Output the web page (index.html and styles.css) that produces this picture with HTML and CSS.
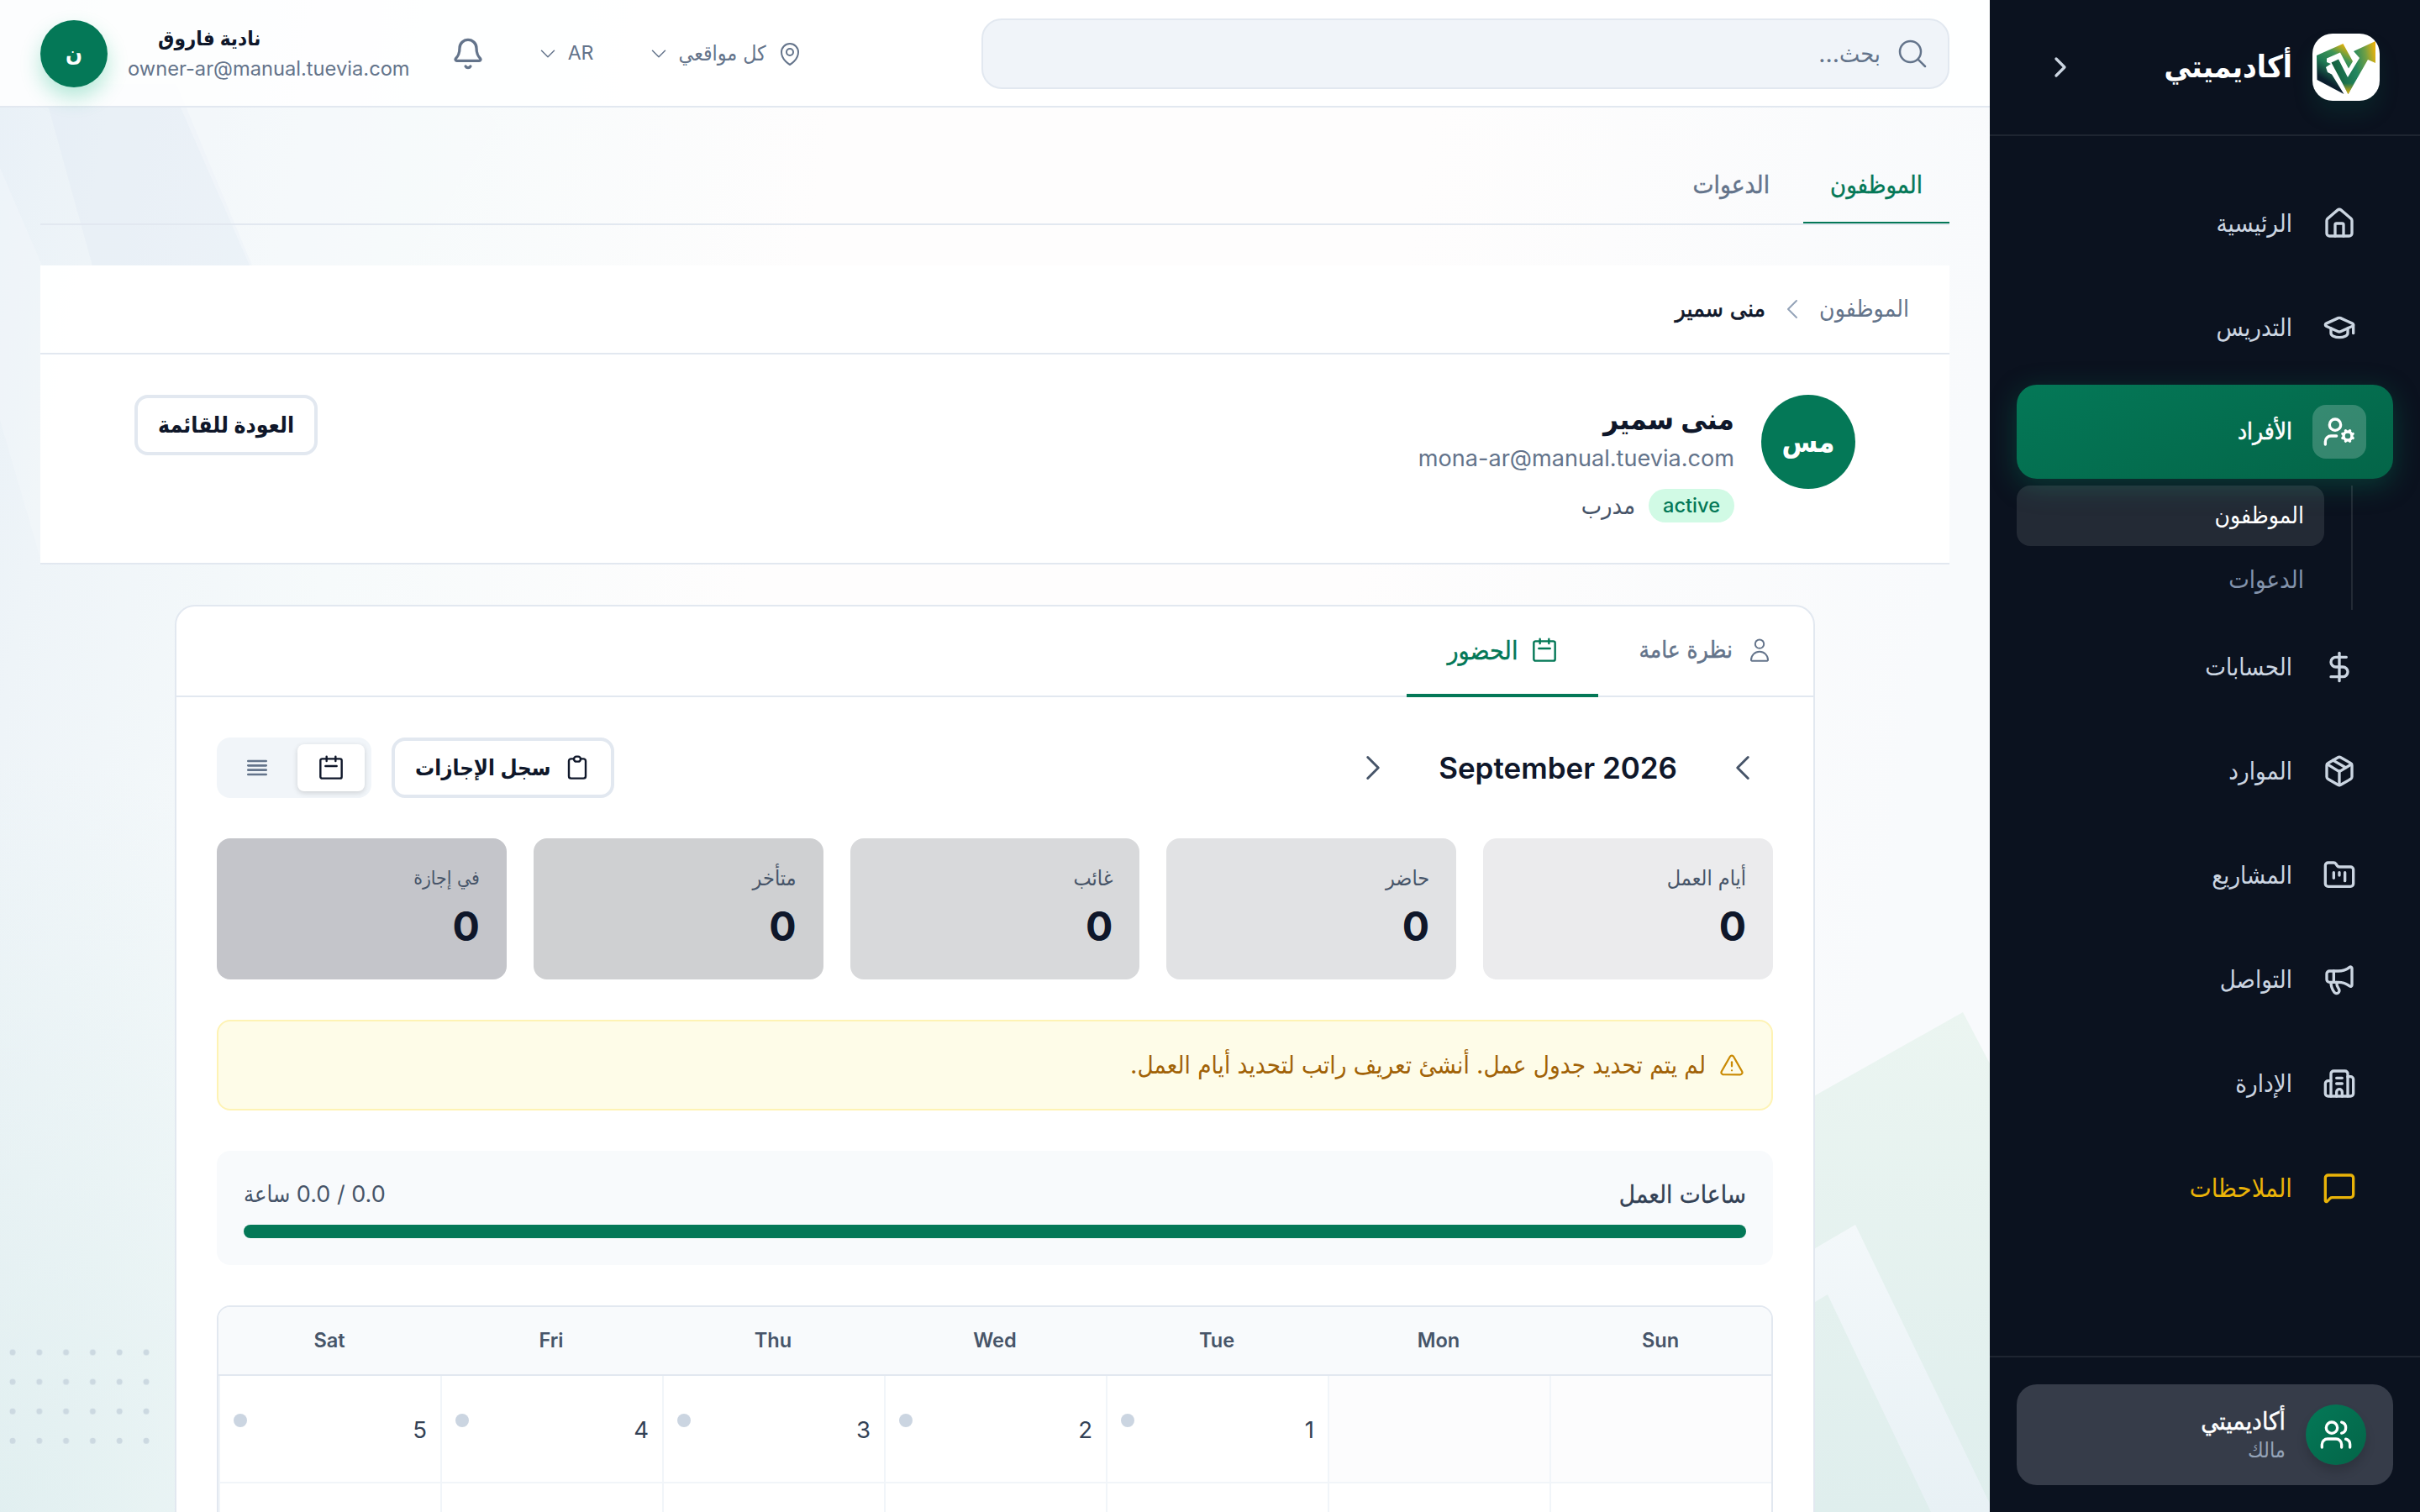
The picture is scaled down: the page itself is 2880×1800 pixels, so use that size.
FILE: index.html
```html
<!DOCTYPE html>
<html lang="ar" dir="rtl">
<head>
    <meta charset="UTF-8">
    <meta name="viewport" content="width=device-width, initial-scale=1.0">
    <title>أكاديميتي</title>
    <link rel="stylesheet" href="styles.css">
</head>
<body>
    <aside class="sidebar">
        <div class="brand">
            <svg class="brand-logo" viewBox="0 0 80 80">
                <defs>
                    <linearGradient id="ribbon" x1="0.3" y1="1" x2="0.75" y2="0">
                        <stop offset="0.2" stop-color="#0b1f2e"></stop>
                        <stop offset="0.5" stop-color="#1f7a54"></stop>
                        <stop offset="0.75" stop-color="#3f9556"></stop>
                        <stop offset="1" stop-color="#eab308"></stop>
                    </linearGradient>
                    <linearGradient id="arrow" x1="0" y1="0.3" x2="1" y2="0.1">
                        <stop offset="0" stop-color="#14603f"></stop>
                        <stop offset="0.5" stop-color="#23875f"></stop>
                        <stop offset="0.75" stop-color="#6f9f45"></stop>
                        <stop offset="1" stop-color="#f0b40a"></stop>
                    </linearGradient>
                    <linearGradient id="tip" x1="0" y1="0" x2="0" y2="1">
                        <stop offset="0.7" stop-color="#eab308" stop-opacity="0"></stop>
                        <stop offset="1" stop-color="#eab308"></stop>
                    </linearGradient>
                </defs>
                <path fill="url(#ribbon)" d="M5 26 36.500 12 48 33 43 41.500 33 22.500 17 29.500 17 34 22 36 16 40 18 46 23 48.500 37.500 72 5.500 55z"></path>
                <path fill="url(#arrow)" d="M22.500 34.500 31 30.500 42 52 56 29 49 21 75 9 75 35 66 31 42.500 72z"></path>
                <path fill="url(#tip)" d="M22.500 34.500 31 30.500 42 52 56 29 66 31 42.500 72z"></path>
            </svg>
            <span class="brand-name">أكاديميتي</span>
            <button class="collapse">
                <svg class="icon" viewBox="0 0 24 24"><path d="m9 18 6-6-6-6"></path></svg>
            </button>
        </div>

        <nav class="nav">
            <a class="nav-item">
                <span class="nav-icon"><svg class="icon" viewBox="0 0 24 24"><path d="M15 21v-8a1 1 0 0 0-1-1h-4a1 1 0 0 0-1 1v8"></path><path d="M3 10a2 2 0 0 1 .709-1.528l7-5.999a2 2 0 0 1 2.582 0l7 5.999A2 2 0 0 1 21 10v9a2 2 0 0 1-2 2H5a2 2 0 0 1-2-2z"></path></svg></span>
                <span>الرئيسية</span>
            </a>
            <a class="nav-item">
                <span class="nav-icon"><svg class="icon" viewBox="0 0 24 24"><path d="M21.420 10.922a1 1 0 0 0-.019-1.838L12.830 5.180a2 2 0 0 0-1.660 0L2.600 9.080a1 1 0 0 0 0 1.832l8.570 3.908a2 2 0 0 0 1.660 0z"></path><path d="M22 10v6"></path><path d="M6 12.500V16a6 3 0 0 0 12 0v-3.500"></path></svg></span>
                <span>التدريس</span>
            </a>
            <div class="nav-group">
                <a class="nav-item active">
                    <span class="nav-icon"><svg class="icon" viewBox="0 0 24 24"><path d="M10 15H6a4 4 0 0 0-4 4v2"></path><circle cx="9" cy="7" r="4"></circle><circle cx="18" cy="15" r="3"></circle><path d="m14.305 16.530.923-.382"></path><path d="m15.228 13.852-.923-.383"></path><path d="m16.852 12.228-.383-.923"></path><path d="m16.852 17.772-.383.924"></path><path d="m19.148 12.228.383-.923"></path><path d="m19.530 18.696-.382-.924"></path><path d="m20.772 13.852.924-.383"></path><path d="m20.772 16.148.924.383"></path></svg></span>
                    <span>الأفراد</span>
                </a>
                <div class="subnav">
                    <a class="subnav-item current">الموظفون</a>
                    <a class="subnav-item">الدعوات</a>
                </div>
            </div>
            <a class="nav-item">
                <span class="nav-icon"><svg class="icon" viewBox="0 0 24 24"><path d="M12 2v20"></path><path d="M17 5H9.500a3.500 3.500 0 0 0 0 7h5a3.500 3.500 0 0 1 0 7H6"></path></svg></span>
                <span>الحسابات</span>
            </a>
            <a class="nav-item">
                <span class="nav-icon"><svg class="icon" viewBox="0 0 24 24"><path d="M11 21.730a2 2 0 0 0 2 0l7-4A2 2 0 0 0 21 16V8a2 2 0 0 0-1-1.730l-7-4a2 2 0 0 0-2 0l-7 4A2 2 0 0 0 3 8v8a2 2 0 0 0 1 1.730z"></path><path d="M12 22V12"></path><path d="m3.300 7 7.703 4.734a2 2 0 0 0 1.994 0L20.700 7"></path><path d="m7.500 4.270 9 5.150"></path></svg></span>
                <span>الموارد</span>
            </a>
            <a class="nav-item">
                <span class="nav-icon"><svg class="icon" viewBox="0 0 24 24"><path d="M4 20h16a2 2 0 0 0 2-2V8a2 2 0 0 0-2-2h-7.930a2 2 0 0 1-1.660-.9l-.82-1.200A2 2 0 0 0 7.930 3H4a2 2 0 0 0-2 2v13c0 1.100.9 2 2 2Z"></path><path d="M8 10v4"></path><path d="M12 10v2"></path><path d="M16 10v6"></path></svg></span>
                <span>المشاريع</span>
            </a>
            <a class="nav-item">
                <span class="nav-icon"><svg class="icon" viewBox="0 0 24 24"><path d="M11 6a13 13 0 0 0 8.400-2.800A1 1 0 0 1 21 4v12a1 1 0 0 1-1.600.8A13 13 0 0 0 11 14H5a2 2 0 0 1-2-2V8a2 2 0 0 1 2-2z"></path><path d="M6 14a12 12 0 0 0 2.400 7.200 2 2 0 0 0 3.200-2.400A8 8 0 0 1 10 14"></path><path d="M8 6v8"></path></svg></span>
                <span>التواصل</span>
            </a>
            <a class="nav-item">
                <span class="nav-icon"><svg class="icon" viewBox="0 0 24 24"><path d="M10 12h4"></path><path d="M10 8h4"></path><path d="M14 21v-3a2 2 0 0 0-4 0v3"></path><path d="M6 10H4a2 2 0 0 0-2 2v7a2 2 0 0 0 2 2h16a2 2 0 0 0 2-2V9a2 2 0 0 0-2-2h-2"></path><path d="M6 21V5a2 2 0 0 1 2-2h8a2 2 0 0 1 2 2v16"></path></svg></span>
                <span>الإدارة</span>
            </a>
            <a class="nav-item feedback">
                <span class="nav-icon"><svg class="icon" viewBox="0 0 24 24"><path d="M22 17a2 2 0 0 1-2 2H6.828a2 2 0 0 0-1.414.586l-2.202 2.202A.71.71 0 0 1 2 21.286V5a2 2 0 0 1 2-2h16a2 2 0 0 1 2 2z"></path></svg></span>
                <span>الملاحظات</span>
            </a>
        </nav>

        <div class="sidebar-footer">
            <div class="account">
                <span class="account-avatar"><svg class="icon" viewBox="0 0 24 24"><path d="M16 21v-2a4 4 0 0 0-4-4H6a4 4 0 0 0-4 4v2"></path><path d="M16 3.128a4 4 0 0 1 0 7.744"></path><path d="M22 21v-2a4 4 0 0 0-3-3.870"></path><circle cx="9" cy="7" r="4"></circle></svg></span>
                <div>
                    <div class="account-name">أكاديميتي</div>
                    <div class="account-role">مالك</div>
                </div>
            </div>
        </div>
    </aside>

    <div class="main">
        <svg class="backdrop" viewBox="0 0 2368 1800" preserveAspectRatio="none">
            <defs>
                <linearGradient id="leaf" x1="0" y1="0" x2="0" y2="1">
                    <stop offset="0" stop-color="#ebf5f1"></stop>
                    <stop offset="1" stop-color="#dfeeed"></stop>
                </linearGradient>
                <linearGradient id="beam" x1="0" y1="0" x2="0" y2="1">
                    <stop offset="0" stop-color="#f3f8fa"></stop>
                    <stop offset="1" stop-color="#e8f1f5"></stop>
                </linearGradient>
                <pattern id="dots" x="0" y="1592" width="31.800" height="35.100" patternUnits="userSpaceOnUse">
                    <circle cx="15" cy="18" r="3.500" fill="#ccd9e1"></circle>
                </pattern>
            </defs>
            <path fill="#dfe9f4" fill-opacity="0.350" d="M50 100H210L300 316H110z"></path>
            <path fill="#f6fafc" fill-opacity="0.350" d="M0 200 50 316V672L0 500z"></path>
            <path fill="#f8fbfc" fill-opacity="0.400" d="M215 128H575L592 148 485 316H297z"></path>
            <path fill="url(#leaf)" d="M2336 1205 2368 1266V1800H2100V1338z"></path>
            <path fill="url(#beam)" d="M2208 1458 2368 1790V1800H2298L2175 1541 2150 1556V1492z"></path>
            <rect x="0" y="1592" width="190" height="140" fill="url(#dots)"></rect>
        </svg>

        <header class="topbar">
            <div class="search">
                <svg class="icon thin" viewBox="0 0 24 24"><path d="m21 21-5.197-5.197m0 0A7.500 7.500 0 1 0 5.196 5.196a7.500 7.500 0 0 0 10.607 10.607Z"></path></svg>
                <span>بحث...</span>
            </div>
            <div class="topbar-actions">
                <div class="picker sites">
                    <svg class="icon thin small" viewBox="0 0 24 24"><path d="M15 10.500a3 3 0 1 1-6 0 3 3 0 0 1 6 0Z"></path><path d="M19.500 10.500c0 7.142-7.500 11.250-7.500 11.250S4.500 17.642 4.500 10.500a7.500 7.500 0 1 1 15 0Z"></path></svg>
                    <span>كل مواقعي</span>
                    <svg class="icon thin tiny" viewBox="0 0 24 24"><path d="m19.500 8.250-7.500 7.500-7.500-7.500"></path></svg>
                </div>
                <div class="picker lang">
                    <span>AR</span>
                    <svg class="icon thin tiny" viewBox="0 0 24 24"><path d="m19.500 8.250-7.500 7.500-7.500-7.500"></path></svg>
                </div>
                <button class="bell">
                    <svg class="icon" viewBox="0 0 24 24"><path d="M10.268 21a2 2 0 0 0 3.464 0"></path><path d="M3.262 15.326A1 1 0 0 0 4 17h16a1 1 0 0 0 .74-1.673C19.410 13.956 18 12.499 18 8A6 6 0 0 0 6 8c0 4.499-1.411 5.956-2.738 7.326"></path></svg>
                </button>
                <div class="user">
                    <div class="user-text">
                        <div class="user-name">نادية فاروق</div>
                        <div class="user-email">owner-ar@manual.tuevia.com</div>
                    </div>
                    <span class="user-avatar">ن</span>
                </div>
            </div>
        </header>

        <div class="content">
            <div class="page-tabs">
                <a class="page-tab active">الموظفون</a>
                <a class="page-tab">الدعوات</a>
            </div>

            <section class="profile">
                <div class="breadcrumb">
                    <span>الموظفون</span>
                    <svg class="icon thin small" viewBox="0 0 24 24"><path d="M15.750 19.500 8.250 12l7.500-7.500"></path></svg>
                    <span class="breadcrumb-current">منى سمير</span>
                </div>
                <div class="profile-body">
                    <span class="profile-avatar">مس</span>
                    <div class="profile-info">
                        <h1>منى سمير</h1>
                        <div class="profile-email">mona-ar@manual.tuevia.com</div>
                        <div class="profile-meta">
                            <span class="badge">active</span>
                            <span>مدرب</span>
                        </div>
                    </div>
                    <button class="btn">العودة للقائمة</button>
                </div>
            </section>

            <section class="card">
                <div class="card-tabs">
                    <a class="card-tab">
                        <svg class="icon thin small" viewBox="0 0 24 24"><circle cx="12" cy="6.500" r="3.900"></circle><path d="M4.500 20.800a7.500 7.500 0 0 1 15 0 .7.7 0 0 1-.7.7H5.200a.7.7 0 0 1-.7-.7z"></path></svg>
                        <span>نظرة عامة</span>
                    </a>
                    <a class="card-tab active">
                        <svg class="icon medium small" viewBox="0 0 24 24"><rect x="2.500" y="4" width="19" height="17.500" rx="1.500"></rect><path d="M8 2v4"></path><path d="M16 2v4"></path><path d="M7 10.500h10"></path></svg>
                        <span>الحضور</span>
                    </a>
                </div>

                <div class="card-body">
                    <div class="toolbar">
                        <div class="month">
                            <button class="month-btn"><svg class="icon medium" viewBox="0 0 24 24"><path d="M15.750 19.500 8.250 12l7.500-7.500"></path></svg></button>
                            <span class="month-label">September 2026</span>
                            <button class="month-btn"><svg class="icon medium" viewBox="0 0 24 24"><path d="m8.250 4.500 7.500 7.500-7.500 7.500"></path></svg></button>
                        </div>
                        <div class="toolbar-actions">
                            <button class="btn log">
                                <svg class="icon medium small" viewBox="0 0 24 24"><path d="M9 4H6.500a2 2 0 0 0-2 2v13.500a2 2 0 0 0 2 2h11a2 2 0 0 0 2-2V6a2 2 0 0 0-2-2H15"></path><rect x="9" y="2" width="6" height="4.500" rx="2.200"></rect></svg>
                                <span>سجل الإجازات</span>
                            </button>
                            <div class="view-toggle">
                                <span class="view on"><svg class="icon medium small" viewBox="0 0 24 24"><rect x="2.500" y="4" width="19" height="17.500" rx="1.500"></rect><path d="M8 2v4"></path><path d="M16 2v4"></path><path d="M7 10.500h10"></path></svg></span>
                                <span class="view"><svg class="icon small" viewBox="0 0 24 24"><path d="M4 6h16"></path><path d="M4 10h16"></path><path d="M4 14h16"></path><path d="M4 18h16"></path></svg></span>
                            </div>
                        </div>
                    </div>

                    <div class="stats">
                        <div class="stat s1"><div class="stat-label">أيام العمل</div><div class="stat-value">0</div></div>
                        <div class="stat s2"><div class="stat-label">حاضر</div><div class="stat-value">0</div></div>
                        <div class="stat s3"><div class="stat-label">غائب</div><div class="stat-value">0</div></div>
                        <div class="stat s4"><div class="stat-label">متأخر</div><div class="stat-value">0</div></div>
                        <div class="stat s5"><div class="stat-label">في إجازة</div><div class="stat-value">0</div></div>
                    </div>

                    <div class="alert">
                        <svg class="icon medium" viewBox="0 0 24 24"><path d="m21.730 18-8-14a2 2 0 0 0-3.480 0l-8 14A2 2 0 0 0 4 21h16a2 2 0 0 0 1.730-3"></path><path d="M12 9v4"></path><path d="M12 17h.01"></path></svg>
                        <span>لم يتم تحديد جدول عمل. أنشئ تعريف راتب لتحديد أيام العمل.</span>
                    </div>

                    <div class="hours">
                        <div class="hours-head">
                            <span class="hours-title">ساعات العمل</span>
                            <span class="hours-value">0.0 / 0.0 ساعة</span>
                        </div>
                        <div class="hours-bar"></div>
                    </div>

                    <div class="calendar">
                        <div class="week head">
                            <span>Sun</span><span>Mon</span><span>Tue</span><span>Wed</span><span>Thu</span><span>Fri</span><span>Sat</span>
                        </div>
                        <div class="week">
                            <div class="day empty"></div>
                            <div class="day empty"></div>
                            <div class="day"><span>1</span><i class="dot"></i></div>
                            <div class="day"><span>2</span><i class="dot"></i></div>
                            <div class="day"><span>3</span><i class="dot"></i></div>
                            <div class="day"><span>4</span><i class="dot"></i></div>
                            <div class="day"><span>5</span><i class="dot"></i></div>
                        </div>
                        <div class="week">
                            <div class="day"></div>
                            <div class="day"></div>
                            <div class="day"></div>
                            <div class="day"></div>
                            <div class="day"></div>
                            <div class="day"></div>
                            <div class="day"></div>
                        </div>
                    </div>
                </div>
            </section>
        </div>
    </div>
</body>
</html>
```
FILE: styles.css
```css
* {
    margin: 0;
    padding: 0;
    box-sizing: border-box;
}

body {
    display: flex;
    height: 1800px;
    overflow: hidden;
    background-color: #fdfdfe;
    color: #0f172a;
    font-family: Inter, "DejaVu Sans Condensed", "DejaVu Sans", sans-serif;
    font-size: 29.2px;
    line-height: 1.2;
}

button {
    background: none;
    border: none;
    color: inherit;
    font: inherit;
}

.icon {
    width: 40px;
    height: 40px;
    flex-shrink: 0;
    fill: none;
    stroke: currentColor;
    stroke-width: 2;
    stroke-linecap: round;
    stroke-linejoin: round;
}

.icon.thin {
    stroke-width: 1.5;
}

.icon.medium {
    stroke-width: 1.8;
}

.icon.small {
    width: 32px;
    height: 32px;
}

.icon.tiny {
    width: 24px;
    height: 24px;
}

/* Sidebar */
.sidebar {
    width: 512px;
    flex-shrink: 0;
    display: flex;
    flex-direction: column;
    background-color: #0b121f;
    color: #cbd5e1;
}

.brand {
    height: 162px;
    display: flex;
    align-items: center;
    gap: 24px;
    padding: 0 48px;
    border-bottom: 2px solid #1e2531;
}

.brand-logo {
    width: 80px;
    height: 80px;
    background-color: #fff;
    border-radius: 24px;
    box-shadow: 0 16px 24px rgba(5, 122, 85, 0.15);
}

.brand-name {
    flex: 1;
    font-size: 36.2px;
    font-weight: 700;
    color: #fff;
}

.collapse {
    width: 72px;
    height: 72px;
    padding: 16px;
}

.nav {
    flex: 1;
    display: flex;
    flex-direction: column;
    gap: 12px;
    padding: 48px 32px;
}

.nav-item {
    height: 112px;
    display: flex;
    align-items: center;
    gap: 24px;
    padding: 0 32px;
    border-radius: 24px;
}

.nav-icon {
    width: 64px;
    height: 64px;
    padding: 12px;
    border-radius: 16px;
}

.nav-item.active {
    color: #fff;
    font-size: 27.8px;
    -webkit-text-stroke: 0.5px currentColor;
    background: linear-gradient(160deg, #047857, #046548);
    box-shadow: 0 8px 32px rgba(4, 120, 87, 0.4);
}

.nav-item.active .nav-icon {
    background-color: rgba(255, 255, 255, 0.2);
}

.nav-item.feedback {
    color: #eab308;
    font-size: 30.6px;
}

.subnav {
    display: flex;
    flex-direction: column;
    gap: 4px;
    margin: 8px 48px 0 0;
    padding-right: 32px;
    border-right: 2px solid rgba(255, 255, 255, 0.1);
}

.subnav-item {
    height: 72px;
    display: flex;
    align-items: center;
    padding: 0 24px;
    border-radius: 16px;
    color: #8393ab;
    font-size: 29px;
}

.subnav-item.current {
    background-color: rgba(255, 255, 255, 0.1);
    color: #fff;
    font-size: 28px;
}

.sidebar-footer {
    padding: 32px;
    border-top: 2px solid #1e2531;
}

.account {
    height: 120px;
    display: flex;
    align-items: center;
    gap: 24px;
    padding: 0 32px;
    border-radius: 24px;
    background-color: #363c49;
}

.account-avatar {
    width: 72px;
    height: 72px;
    padding: 16px;
    border-radius: 50%;
    color: #fff;
    background: linear-gradient(135deg, #047857, #046548);
    box-shadow: 0 8px 12px rgba(0, 0, 0, 0.15);
}

.account-name {
    color: #fff;
    font-size: 29.5px;
    line-height: 36px;
    -webkit-text-stroke: 0.4px currentColor;
}

.account-role {
    color: #94a3b8;
    font-size: 25.2px;
    line-height: 34px;
}

/* Main area */
.main {
    position: relative;
    flex: 1;
    min-width: 0;
    height: 1800px;
    overflow: hidden;
    background:
        radial-gradient(ellipse 700px 900px at 0 1800px, rgba(214, 234, 234, 0.6), rgba(214, 234, 234, 0)),
        linear-gradient(100deg, #e8f0f7 0, #eef4f8 150px, #f6fafb 500px, #fefdfd 1000px, #fefdfd 1700px, #f8fafc 2400px);
}

.backdrop {
    position: absolute;
    inset: 0;
    width: 100%;
    height: 100%;
}

.topbar {
    position: relative;
    height: 128px;
    display: flex;
    align-items: center;
    justify-content: space-between;
    padding: 2px 48px 0;
    background-color: rgba(255, 255, 255, 0.85);
    border-bottom: 2px solid #e2e8f0;
}

.search {
    width: 1152px;
    height: 84px;
    display: flex;
    align-items: center;
    gap: 18px;
    padding: 0 22px;
    border: 2px solid #e2e8f0;
    border-radius: 24px;
    background-color: #f0f4f9;
    color: #64748b;
    font-size: 28.6px;
}

.topbar-actions {
    display: flex;
    align-items: center;
    color: #64748b;
}

.picker {
    display: flex;
    align-items: center;
    gap: 12px;
    font-size: 24.8px;
}

.lang {
    margin: 0 65px 0 47px;
    font-size: 23.2px;
}

.bell {
    width: 72px;
    height: 72px;
    padding: 16px;
}

.user {
    display: flex;
    align-items: center;
    gap: 24px;
    margin-right: 33px;
}

.user-text {
    direction: ltr;
    text-align: left;
}

.user-name {
    margin-left: 36px;
    color: #0f172a;
    font-size: 24.1px;
    font-weight: 600;
    line-height: 36px;
}

.user-email {
    font-size: 23.7px;
    line-height: 36px;
}

.user-avatar {
    width: 80px;
    height: 80px;
    display: flex;
    align-items: center;
    justify-content: center;
    border-radius: 50%;
    background-color: #047857;
    color: #fff;
    font-size: 26px;
    font-weight: 700;
    box-shadow: 0 12px 24px rgba(16, 185, 129, 0.3);
}

.content {
    position: relative;
    padding: 48px;
}

.page-tabs {
    height: 92px;
    display: flex;
    gap: 8px;
    border-bottom: 2px solid #e2e8f0;
}

.page-tab {
    display: flex;
    align-items: center;
    padding: 0 32px;
    color: #64748b;
    font-size: 29.6px;
    border-bottom: 2px solid transparent;
    -webkit-text-stroke: 0.4px currentColor;
}

.page-tab.active {
    color: #047857;
    border-color: #047857;
    font-size: 28.9px;
}

/* Employee header */
.profile {
    margin-top: 48px;
    background-color: rgba(255, 255, 255, 0.95);
}

.breadcrumb {
    height: 106px;
    display: flex;
    align-items: center;
    gap: 16px;
    padding: 0 48px;
    color: #64748b;
    font-size: 28.1px;
    border-bottom: 2px solid #e2e8f0;
}

.breadcrumb .icon {
    color: #94a3b8;
}

.breadcrumb-current {
    color: #0f172a;
    -webkit-text-stroke: 0.6px currentColor;
}

.profile-body {
    height: 250px;
    display: flex;
    align-items: flex-start;
    gap: 32px;
    padding: 48px 112px;
    border-bottom: 2px solid #e2e8f0;
}

.profile-avatar {
    width: 112px;
    height: 112px;
    display: flex;
    align-items: center;
    justify-content: center;
    border-radius: 50%;
    background-color: #047857;
    color: #fff;
    font-size: 34.5px;
    font-weight: 700;
}

.profile-info {
    flex: 1;
}

.profile-info h1 {
    font-size: 34.8px;
    font-weight: 700;
    line-height: 56px;
}

.profile-email {
    color: #64748b;
    font-size: 27.1px;
    line-height: 40px;
}

.profile-meta {
    display: flex;
    align-items: center;
    gap: 16px;
    margin-top: 16px;
    color: #475569;
    font-size: 28.8px;
}

.badge {
    height: 40px;
    padding: 0 17px;
    border-radius: 20px;
    background-color: #d1fae5;
    color: #047857;
    font-size: 23.6px;
    font-weight: 500;
    line-height: 40px;
}

.btn {
    height: 72px;
    display: flex;
    align-items: center;
    gap: 16px;
    padding: 0 24px;
    border: 4px solid #e2e8f0;
    border-radius: 16px;
    background-color: #fff;
    color: #0f172a;
    font-size: 26.4px;
    font-weight: 600;
}

.btn.log {
    font-size: 25.7px;
}

/* Attendance card */
.card {
    width: 1952px;
    height: 1200px;
    margin: 48px auto 0;
    border: 2px solid #e2e8f0;
    border-radius: 24px;
    background-color: #fff;
}

.card-tabs {
    height: 108px;
    display: flex;
    border-bottom: 2px solid #e2e8f0;
}

.card-tab {
    height: 108px;
    display: flex;
    align-items: center;
    gap: 16px;
    padding: 0 48px;
    color: #64748b;
    font-size: 27.8px;
    border-bottom: 4px solid transparent;
    -webkit-text-stroke: 0.4px currentColor;
}

.card-tab.active {
    color: #047857;
    border-color: #047857;
    font-size: 30.2px;
}

.card-body {
    display: flex;
    flex-direction: column;
    gap: 48px;
    padding: 48px;
}

.toolbar,
.month,
.toolbar-actions {
    display: flex;
    align-items: center;
}

.toolbar {
    justify-content: space-between;
}

.month {
    gap: 42px;
}

.month-btn {
    width: 72px;
    height: 72px;
    padding: 16px;
    color: #475569;
}

.month-label {
    direction: ltr;
    font-size: 35px;
    font-weight: 600;
}

.toolbar-actions {
    gap: 24px;
}

.view-toggle {
    height: 72px;
    display: flex;
    gap: 8px;
    padding: 8px;
    border-radius: 16px;
    background-color: #f1f5f9;
}

.view {
    width: 80px;
    height: 56px;
    display: flex;
    align-items: center;
    justify-content: center;
    border-radius: 8px;
    color: #64748b;
}

.view.on {
    background-color: #fff;
    color: #0f172a;
    box-shadow: 0 2px 6px rgba(0, 0, 0, 0.15);
}

.stats {
    display: grid;
    grid-template-columns: repeat(5, 1fr);
    gap: 32px;
}

.stat {
    height: 168px;
    padding: 27px 32px;
    border-radius: 16px;
}

.s1 { background-color: #ebebed; }
.s2 { background-color: #e1e2e4; }
.s3 { background-color: #d8d9db; }
.s4 { background-color: #cfd0d2; }
.s5 { background-color: #c4c5ca; }

.stat-label {
    color: #475569;
    font-size: 25px;
    line-height: 40px;
}

.s5 .stat-label {
    font-size: 22.8px;
}

.stat-value {
    font-size: 48px;
    font-weight: 700;
    line-height: 64px;
    margin-top: 6px;
}

.alert {
    height: 108px;
    display: flex;
    align-items: center;
    gap: 16px;
    padding: 0 32px;
    border: 2px solid #fef3b4;
    border-radius: 16px;
    background-color: #fefce8;
    color: #a16207;
    font-size: 29.4px;
}

.alert .icon {
    width: 30px;
    height: 30px;
    color: #ca8a04;
}

.hours {
    height: 136px;
    padding: 32px;
    border-radius: 16px;
    background-color: #f8fafc;
}

.hours-head {
    height: 40px;
    display: flex;
    align-items: center;
    justify-content: space-between;
    margin-bottom: 16px;
}

.hours-title {
    color: #334155;
    font-size: 29.5px;
    -webkit-text-stroke: 0.3px currentColor;
}

.hours-value {
    color: #475569;
    font-size: 27px;
}

.hours-bar {
    height: 16px;
    border-radius: 8px;
    background-color: #047857;
}

.calendar {
    border: 2px solid #e2e8f0;
    border-radius: 16px;
    overflow: hidden;
}

.week {
    display: grid;
    grid-template-columns: repeat(7, 1fr);
}

.week.head {
    height: 82px;
    align-items: center;
    text-align: center;
    background-color: #f8fafc;
    border-bottom: 2px solid #e2e8f0;
    color: #475569;
    font-size: 23.6px;
    font-weight: 600;
}

.day {
    height: 128px;
    display: flex;
    align-items: center;
    justify-content: space-between;
    padding: 3px 16px 0;
    border-left: 2px solid #f1f5f9;
    border-bottom: 2px solid #f1f5f9;
    color: #334155;
    font-size: 27.6px;
}

.day.empty {
    background-color: #fcfcfd;
}

.dot {
    width: 16px;
    height: 16px;
    margin-bottom: 24px;
    border-radius: 50%;
    background-color: #cbd5e1;
}
```
